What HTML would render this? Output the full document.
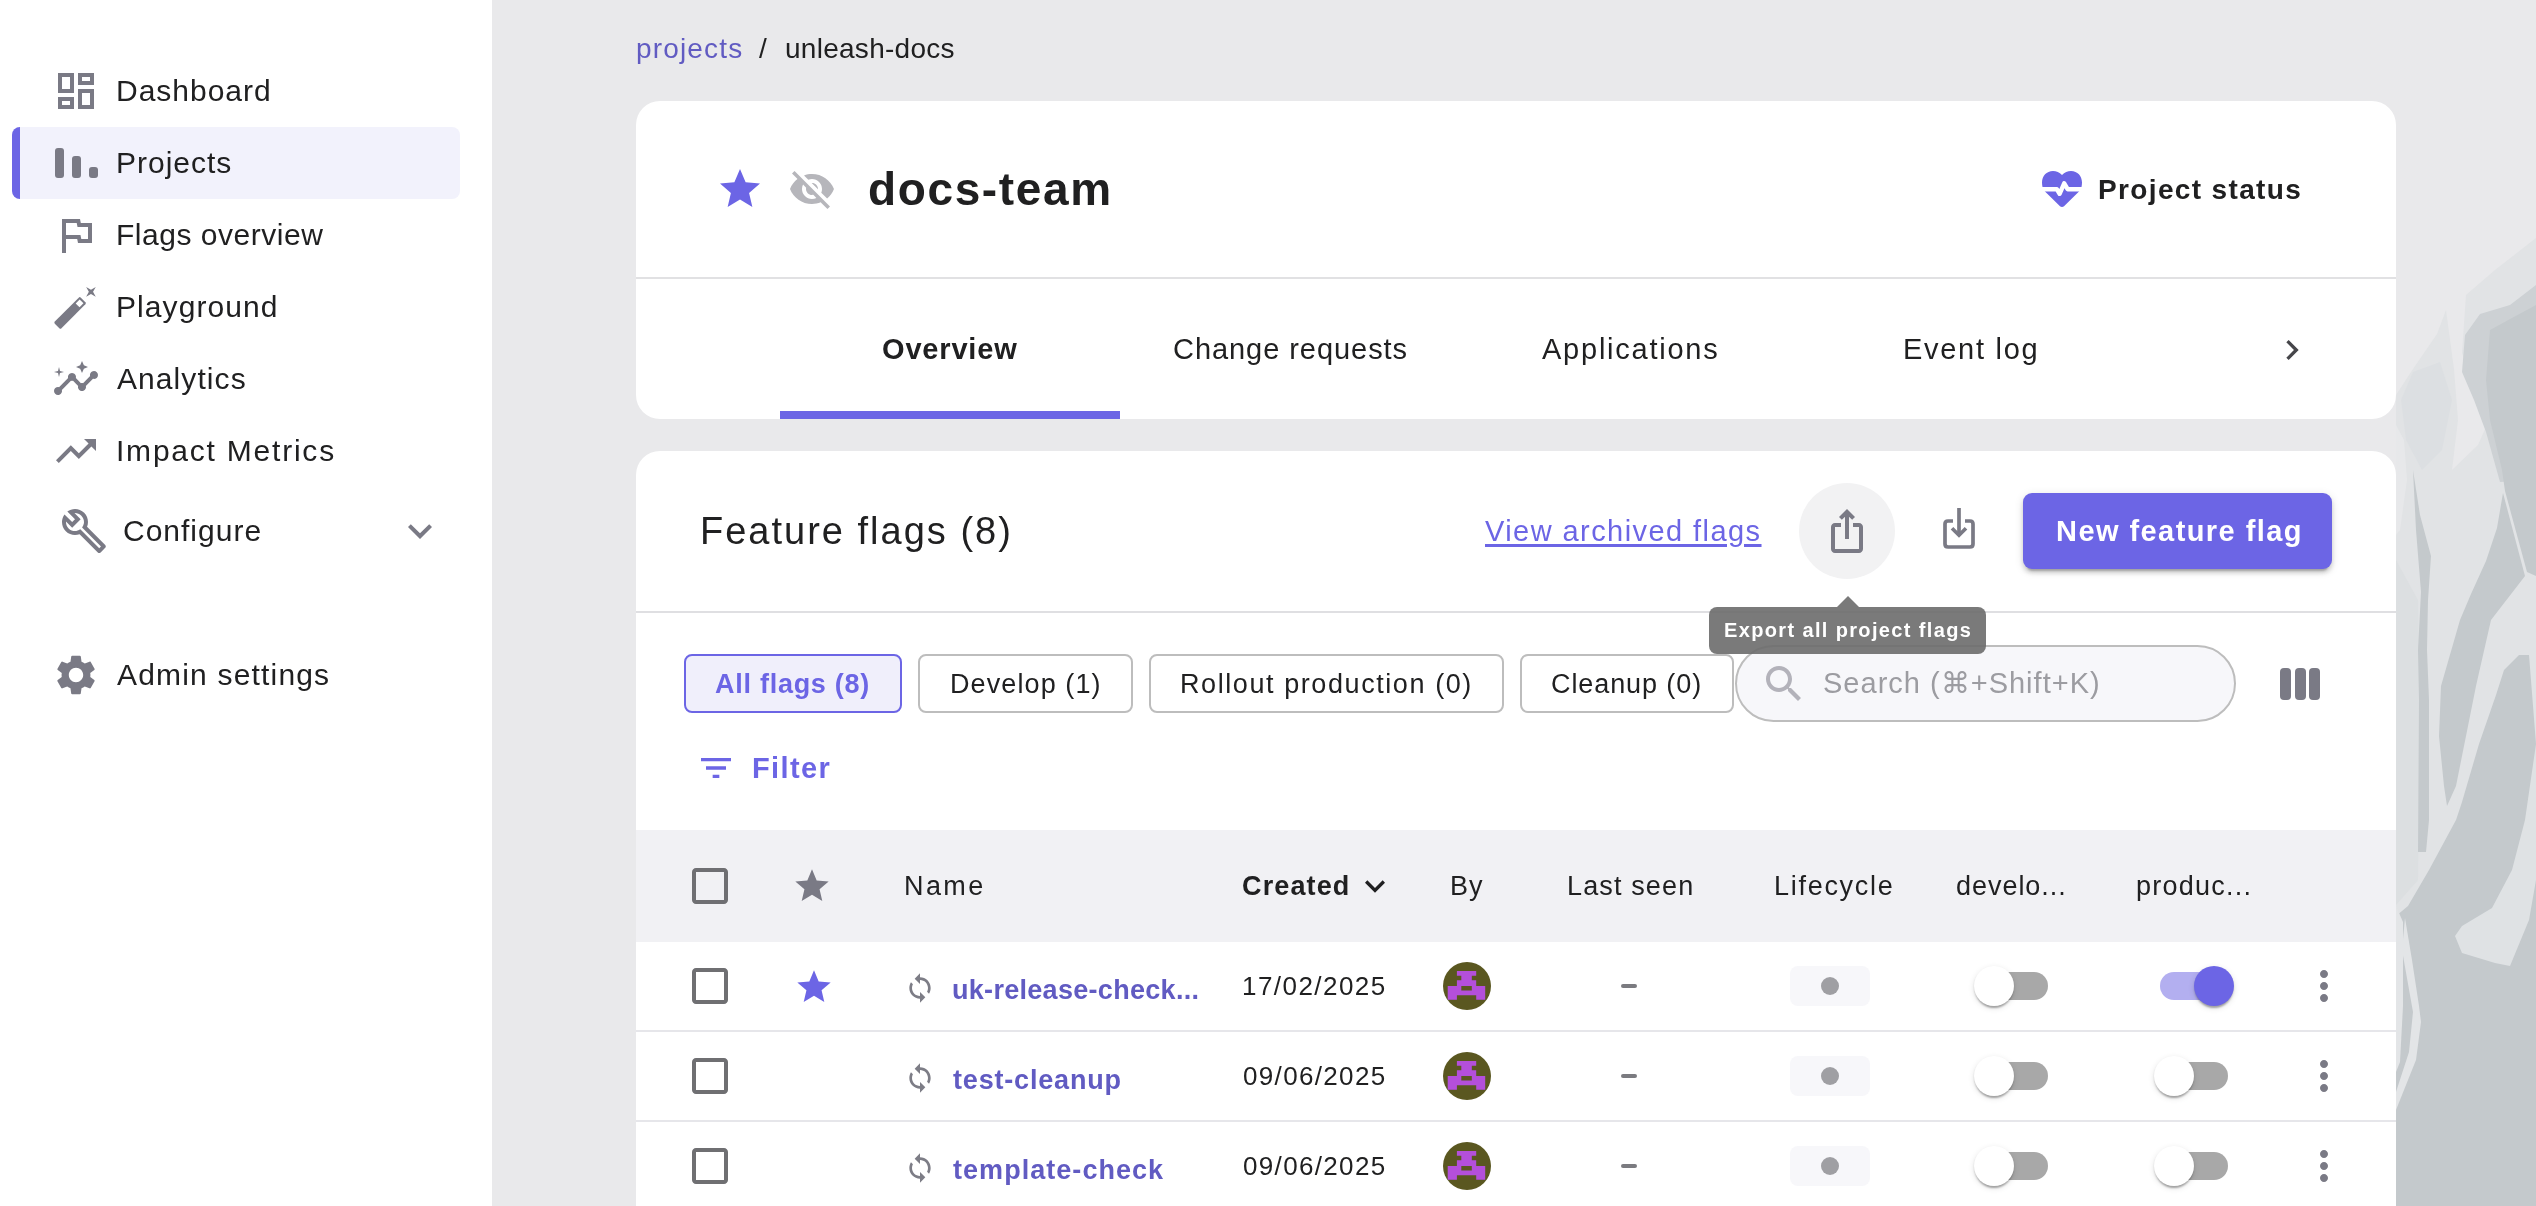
<!DOCTYPE html>
<html><head><meta charset="utf-8"><style>
html,body{margin:0;padding:0;width:2536px;height:1206px;overflow:hidden;background:#E9E9EB}
body{position:relative;font-family:"Liberation Sans",sans-serif}
.t{position:absolute;white-space:nowrap;will-change:transform}
svg{display:block}
</style></head><body>
<div style="position:absolute;left:0;top:0;width:492px;height:1206px;background:#fff"></div>
<div style="position:absolute;left:12px;top:127px;width:448px;height:72px;background:#F2F2FC;border-radius:8px;overflow:hidden"><div style="position:absolute;left:0;top:0;width:8px;height:72px;background:#6C65E5"></div></div>
<svg style="position:absolute;left:52px;top:67px;" width="48" height="48" viewBox="0 0 24 24" fill="#7A7A85"><path d="M19 5v2h-4V5h4M9 5v6H5V5h4m10 8v6h-4v-6h4M9 17v2H5v-2h4M21 3h-8v6h8V3zM11 3H3v10h8V3zm10 8h-8v10h8V11zm-10 4H3v6h8v-6z"/></svg>
<div style="position:absolute;left:55px;top:147.5px;width:8.5px;height:30px;border-radius:3px;background:#7A7A85"></div>
<div style="position:absolute;left:72px;top:156px;width:8.5px;height:21.5px;border-radius:3px;background:#7A7A85"></div>
<div style="position:absolute;left:89px;top:166.5px;width:8.5px;height:11px;border-radius:3px;background:#7A7A85"></div>
<svg style="position:absolute;left:52px;top:211px;" width="48" height="48" viewBox="0 0 24 24" fill="#7A7A85"><path d="M12.36 6l.4 2H18v6h-3.36l-.4-2H7V6h5.36M14 4H5v17h2v-7h5.6l.4 2h7V6h-5.6L14 4z"/></svg>
<svg style="position:absolute;left:0;top:0" width="120" height="720" viewBox="0 0 120 720"><g transform="translate(70.1 312.9) rotate(-45)"><rect x="-18.4" y="-4.7" width="36.8" height="9.4" rx="1.5" fill="#7A7A85"/><rect x="10.6" y="-2.7" width="5.6" height="5.4" fill="#fff"/></g><path d="M86.15 287.05 L90.95 289.75 L95.75 287.05 L93.05 291.85 L95.75 296.65 L90.95 293.95 L86.15 296.65 L88.85 291.85Z" fill="#7A7A85"/></svg>
<svg style="position:absolute;left:52px;top:355px;" width="48" height="48" viewBox="0 0 24 24" fill="#7A7A85"><path d="M21 8c-1.45 0-2.26 1.44-1.93 2.51l-3.55 3.56c-.3-.09-.74-.09-1.04 0l-2.55-2.55C12.27 10.45 11.46 9 10 9c-1.45 0-2.27 1.44-1.93 2.52l-4.56 4.55C2.44 15.74 1 16.55 1 18c0 1.1.9 2 2 2 1.45 0 2.26-1.44 1.93-2.51l4.55-4.56c.3.09.74.09 1.04 0l2.55 2.55C12.73 16.55 13.54 18 15 18c1.45 0 2.27-1.44 1.93-2.52l3.56-3.55c1.07.33 2.51-.48 2.51-1.93 0-1.1-.9-2-2-2z"/><path d="M15 9l.94-2.07L18 6l-2.06-.93L15 3l-.92 2.07L12 6l2.08.93z"/><path d="M3.5 11 4 9l2-.5L4 8l-.5-2L3 8l-2 .5L3 9z"/></svg>
<svg style="position:absolute;left:52px;top:427px;" width="48" height="48" viewBox="0 0 24 24" fill="#7A7A85"><path d="M16 6l2.29 2.29-4.88 4.88-4-4L2 16.59 3.41 18l6-6 4 4 6.3-6.29L22 12V6z"/></svg>
<svg style="position:absolute;left:60.2px;top:506.6px;" width="48" height="48" viewBox="0 0 24 24" fill="#7A7A85"><path d="M22.61 18.99l-9.08-9.08c.93-2.34.45-5.1-1.44-7C9.79.61 6.21.4 3.66 2.26L7.5 6.11 6.08 7.52 2.25 3.69C.39 6.23.6 9.82 2.9 12.11c1.86 1.86 4.57 2.35 6.89 1.48l9.11 9.11c.39.39 1.02.39 1.41 0l2.3-2.3c.4-.38.4-1.01 0-1.41zm-3 1.6l-9.46-9.46c-.61.45-1.29.72-2 .82-1.36.2-2.79-.21-3.83-1.25C3.37 9.76 2.93 8.5 3 7.26l3.09 3.09 4.24-4.24-3.09-3.09c1.24-.07 2.49.37 3.44 1.31 1.08 1.08 1.490 2.57 1.24 3.96-.12.71-.42 1.37-.88 1.96l9.45 9.45-.88.89z"/></svg>
<svg style="position:absolute;left:395.6px;top:507px;" width="48" height="48" viewBox="0 0 24 24" fill="#7A7A85"><path d="M16.59 8.59 12 13.17 7.41 8.59 6 10l6 6 6-6z"/></svg>
<svg style="position:absolute;left:52px;top:650.6px;" width="48" height="48" viewBox="0 0 24 24" fill="#7A7A85"><path d="M19.14 12.94c.04-.3.06-.61.06-.94 0-.32-.02-.64-.07-.94l2.03-1.58c.18-.14.23-.41.12-.61l-1.920-3.32c-.12-.22-.37-.29-.59-.22l-2.39.96c-.5-.38-1.03-.7-1.62-.94l-.36-2.54c-.04-.24-.24-.41-.48-.41h-3.84c-.24 0-.43.17-.47.41l-.36 2.54c-.59.24-1.13.57-1.62.94l-2.39-.96c-.22-.08-.47 0-.59.22L2.74 8.87c-.12.21-.08.47.12.61l2.03 1.58c-.05.3-.09.63-.09.94s.02.64.07.94l-2.03 1.58c-.18.14-.23.41-.12.61l1.92 3.32c.12.22.37.29.59.22l2.39-.96c.5.38 1.03.7 1.62.94l.36 2.54c.05.24.24.41.48.41h3.840c.24 0 .44-.17.47-.41l.36-2.54c.59-.24 1.13-.56 1.62-.94l2.39.96c.22.08.47 0 .59-.22l1.92-3.32c.12-.22.07-.47-.12-.61l-2.01-1.58zM12 15.6c-1.98 0-3.6-1.62-3.6-3.6s1.62-3.6 3.6-3.6 3.6 1.62 3.6 3.6-1.62 3.6-3.6 3.6z"/></svg>
<div class="t" id="tx0" style="left:116.00px;top:75.70px;font-size:30px;line-height:30px;letter-spacing:0.994px;font-weight:400;color:#202021;">Dashboard</div>
<div class="t" id="tx1" style="left:116.00px;top:148.20px;font-size:30px;line-height:30px;letter-spacing:0.993px;font-weight:400;color:#202021;">Projects</div>
<div class="t" id="tx2" style="left:116.00px;top:219.60px;font-size:30px;line-height:30px;letter-spacing:0.527px;font-weight:400;color:#202021;">Flags overview</div>
<div class="t" id="tx3" style="left:116.00px;top:291.61px;font-size:30px;line-height:30px;letter-spacing:1.083px;font-weight:400;color:#202021;">Playground</div>
<div class="t" id="tx4" style="left:116.80px;top:363.61px;font-size:30px;line-height:30px;letter-spacing:1.075px;font-weight:400;color:#202021;">Analytics</div>
<div class="t" id="tx5" style="left:116.40px;top:436.31px;font-size:30px;line-height:30px;letter-spacing:1.777px;font-weight:400;color:#202021;">Impact Metrics</div>
<div class="t" id="tx6" style="left:123.40px;top:516.31px;font-size:30px;line-height:30px;letter-spacing:1.000px;font-weight:400;color:#202021;">Configure</div>
<div class="t" id="tx7" style="left:116.80px;top:659.81px;font-size:30px;line-height:30px;letter-spacing:1.181px;font-weight:400;color:#202021;">Admin settings</div>
<div style="position:absolute;left:492px;top:0;width:2044px;height:1206px;background:#E9E9EB"></div>
<svg style="position:absolute;left:2396px;top:0" width="140" height="1206" viewBox="2396 0 140 1206">
<rect x="2396" y="0" width="140" height="1206" fill="#E9E9EB"/>
<path d="M2536 238 L2495 270 L2466 295 L2462 353 L2474 386 L2489 420 L2478 445 L2452 470 L2458 420 L2454 369 L2446 310 L2437 334 L2413 369 L2396 395 L2396 1206 L2536 1206 Z" fill="#E1E3E5"/>
<path d="M2396 425 L2404 440 L2407 480 L2400 530 L2396 535 Z" fill="#E7E8EA"/>
<path d="M2536 285 L2510 305 L2480 314 L2465 335 L2462 372 L2474 400 L2486 432 L2500 482 L2536 480 Z" fill="#CDD1D4"/>
<path d="M2413 372 L2440 362 L2452 400 L2442 450 L2422 470 L2406 440 L2401 400 Z" fill="#DCDFE2"/>
<path d="M2396 560 L2418 600 L2420 700 L2418 880 L2396 905 Z" fill="#DCDFE1"/>
<path d="M2536 305 L2512 318 L2490 330 L2486 380 L2490 420 L2502 470 L2505 491 L2527 572 L2536 576 Z" fill="#C4C9CC"/>
<path d="M2503 493 L2497 528 L2486 561 L2471 594 L2460 620 L2441 686 L2439 736 L2444 786 L2447 806 L2456 786 L2466 736 L2476 686 L2491 620 L2525 576 Z" fill="#C4C9CC"/>
<path d="M2413 470 L2420 515 L2431 556 L2428 600 L2427 650 L2429 700 L2429 820 L2426 852 L2418 852 L2419 700 L2418 650 L2421 592 L2416 530 Z" fill="#C4C9CC"/>
<path d="M2519 655 L2504 670 L2496 695 L2479 744 L2462 802 L2456 820 L2429 870 L2408 906 L2396 916 L2396 1206 L2536 1206 L2536 744 L2529 655 Z" fill="#C4C9CC"/>
<path d="M2536 744 L2525 820 L2512 870 L2492 908 L2462 926 L2455 936 L2462 953 L2495 963 L2510 966 L2529 920 L2536 880 Z" fill="#DFE2E4"/>
<path d="M2405 918 L2412 960 L2419 1006 L2421 1022 L2416 1060 L2396 1110 L2396 1092 L2409 1052 L2413 1012 L2402 950 Z" fill="#E3E5E7"/>
<path d="M2396 906 L2403 922 L2403 1006 L2400 1062 L2396 1072 Z" fill="#E3E5E7"/>
</svg>

<div class="t" id="tx8" style="left:636.10px;top:35.30px;font-size:28px;line-height:28px;letter-spacing:1.157px;font-weight:400;color:#615BC2;">projects</div>
<div class="t" id="tx9" style="left:759.00px;top:35.30px;font-size:28px;line-height:28px;letter-spacing:0.000px;font-weight:400;color:#202021;">/</div>
<div class="t" id="tx10" style="left:785.40px;top:35.30px;font-size:28px;line-height:28px;letter-spacing:0.273px;font-weight:400;color:#202021;">unleash-docs</div>
<div style="position:absolute;left:636px;top:101px;width:1760px;height:318px;background:#fff;border-radius:24px;overflow:hidden"><div style="position:absolute;left:0;top:176px;width:1760px;height:2px;background:#E1E1E3"></div><div style="position:absolute;left:144px;top:310px;width:340px;height:8px;background:#6C65E5"></div></div>
<svg style="position:absolute;left:715.6px;top:164.6px;" width="48" height="48" viewBox="0 0 24 24" fill="#6C65E5"><path d="M12 17.27 18.18 21l-1.64-7.03L22 9.24l-7.19-.61L12 2 9.19 8.63 2 9.24l5.46 4.73L5.82 21z"/></svg>
<svg style="position:absolute;left:788px;top:165.2px;" width="48" height="48" viewBox="0 0 24 24" fill="#B6B6BB"><path d="M12 7c2.76 0 5 2.24 5 5 0 .65-.13 1.26-.36 1.83l2.92 2.92c1.51-1.26 2.7-2.89 3.43-4.75-1.73-4.39-6-7.5-11-7.5-1.4 0-2.74.25-3.98.7l2.16 2.16C10.74 7.13 11.350 7 12 7zM2 4.27l2.28 2.28.46.46C3.08 8.3 1.78 10.02 1 12c1.73 4.39 6 7.5 11 7.5 1.55 0 3.03-.3 4.38-.84l.42.42L19.73 22 21 20.73 3.27 3 2 4.27zM7.53 9.8l1.55 1.55c-.05.21-.08.43-.08.65 0 1.66 1.34 3 3 3 .22 0 .44-.03.65-.08l1.55 1.55c-.67.33-1.41.53-2.2.53-2.76 0-5-2.24-5-5 0-.79.2-1.53.53-2.2zm4.31-.78 3.15 3.15.02-.16c0-1.66-1.34-3-3-3l-.17.01z"/></svg>
<div class="t" id="tx11" style="left:868.00px;top:166.06px;font-size:46px;line-height:46px;letter-spacing:1.625px;font-weight:700;color:#202021;">docs-team</div>
<svg style="position:absolute;left:2042px;top:171px" width="40" height="37" viewBox="0 0 40 37"><path d="M20 4C17.5 1.3 14.3 0 11 0C4.5 0 0 5 0 11.5C0 13 .2 14.6 .5 16L3 20.5L18 35.2C19 36.3 21 36.3 22 35.2L37 20.5L39.5 16C39.8 14.6 40 13 40 11.5C40 5 35.5 0 29 0C25.7 0 22.5 1.3 20 4Z" fill="#6C65E5"/><path d="M-2 18.2H14.8L17.6 22.8L22.2 12.3L25.6 18.2H42" fill="none" stroke="#fff" stroke-width="4.4" stroke-linejoin="round"/></svg>
<div class="t" id="tx12" style="left:2097.70px;top:176.00px;font-size:28px;line-height:28px;letter-spacing:1.358px;font-weight:700;color:#202021;">Project status</div>
<div class="t" id="tx13" style="left:882.10px;top:335.35px;font-size:29px;line-height:29px;letter-spacing:0.821px;font-weight:700;color:#202021;">Overview</div>
<div class="t" id="tx14" style="left:1173.00px;top:335.45px;font-size:29px;line-height:29px;letter-spacing:0.943px;font-weight:400;color:#202021;">Change requests</div>
<div class="t" id="tx15" style="left:1542.00px;top:334.75px;font-size:29px;line-height:29px;letter-spacing:1.759px;font-weight:400;color:#202021;">Applications</div>
<div class="t" id="tx16" style="left:1902.70px;top:335.45px;font-size:29px;line-height:29px;letter-spacing:1.712px;font-weight:400;color:#202021;">Event log</div>
<svg style="position:absolute;left:2272.3px;top:330px;" width="40" height="40" viewBox="0 0 24 24" fill="#46464A"><path d="M8.59 16.59 13.17 12 8.59 7.41 10 6l6 6-6 6-1.41-1.41z"/></svg>
<div style="position:absolute;left:636px;top:451px;width:1760px;height:800px;background:#fff;border-radius:24px;overflow:hidden"><div style="position:absolute;left:0;top:160px;width:1760px;height:2px;background:#DFDFE2"></div><div style="position:absolute;left:0;top:379px;width:1760px;height:112px;background:#F1F1F4"></div><div style="position:absolute;left:0;top:579px;width:1760px;height:2px;background:#E6E6EA"></div><div style="position:absolute;left:0;top:669px;width:1760px;height:2px;background:#E6E6EA"></div></div>
<div class="t" id="tx17" style="left:700.20px;top:511.83px;font-size:38px;line-height:38px;letter-spacing:2.003px;font-weight:400;color:#202021;">Feature flags (8)</div>
<div class="t" id="tx18" style="left:1485.00px;top:517.45px;font-size:29px;line-height:29px;letter-spacing:1.431px;font-weight:400;color:#6C65E5;text-decoration:underline;text-decoration-thickness:3px;text-underline-offset:3px;">View archived flags</div>
<div style="position:absolute;left:1799px;top:483px;width:96px;height:96px;border-radius:48px;background:#F2F2F3"></div>
<svg style="position:absolute;left:1823px;top:507px;" width="48" height="48" viewBox="0 0 24 24" fill="#7A7A85"><path d="M16 5l-1.42 1.42-1.59-1.59V16h-1.98V4.83L9.42 6.42 8 5l4-4 4 4zm4 5v11c0 1.1-.9 2-2 2H6c-1.11 0-2-.9-2-2V10c0-1.11.89-2 2-2h3v2H6v11h12V10h-3V8h3c1.1 0 2 .89 2 2z"/></svg>
<svg style="position:absolute;left:1930px;top:500px" width="60" height="60" viewBox="1930 500 60 60"><path d="M1953 521H1948Q1945 521 1945 524V544Q1945 547 1948 547H1970Q1973 547 1973 544V524Q1973 521 1970 521H1965" fill="none" stroke="#7A7A85" stroke-width="3.7"/><path d="M1959 508V533" stroke="#7A7A85" stroke-width="3.7"/><path d="M1952 528.3L1959 535.2L1966 528.3" fill="none" stroke="#7A7A85" stroke-width="3.7"/></svg>
<div style="position:absolute;left:2023px;top:493px;width:309px;height:76px;border-radius:9px;background:#6C65E5;box-shadow:0 6px 2px -4px rgba(0,0,0,.2),0 4px 4px 0 rgba(0,0,0,.14),0 2px 10px 0 rgba(0,0,0,.12)"></div>
<div class="t" id="tx19" style="left:2055.50px;top:517.45px;font-size:29px;line-height:29px;letter-spacing:1.433px;font-weight:700;color:#fff;">New feature flag</div>
<div style="position:absolute;left:684px;top:654px;width:218px;height:59px;box-sizing:border-box;border:2px solid #6C65E5;background:#F0EFFB;border-radius:8px"></div>
<div style="position:absolute;left:918px;top:654px;width:215px;height:59px;box-sizing:border-box;border:2px solid #BDBDBD;background:#fff;border-radius:8px"></div>
<div style="position:absolute;left:1149px;top:654px;width:355px;height:59px;box-sizing:border-box;border:2px solid #BDBDBD;background:#fff;border-radius:8px"></div>
<div style="position:absolute;left:1520px;top:654px;width:214px;height:59px;box-sizing:border-box;border:2px solid #BDBDBD;background:#fff;border-radius:8px"></div>
<div class="t" id="tx20" style="left:715.20px;top:670.84px;font-size:27px;line-height:27px;letter-spacing:0.733px;font-weight:700;color:#6C65E5;">All flags (8)</div>
<div class="t" id="tx21" style="left:950.00px;top:670.84px;font-size:27px;line-height:27px;letter-spacing:1.100px;font-weight:400;color:#202021;">Develop (1)</div>
<div class="t" id="tx22" style="left:1180.40px;top:671.14px;font-size:27px;line-height:27px;letter-spacing:1.579px;font-weight:400;color:#202021;">Rollout production (0)</div>
<div class="t" id="tx23" style="left:1551.10px;top:671.14px;font-size:27px;line-height:27px;letter-spacing:0.910px;font-weight:400;color:#202021;">Cleanup (0)</div>
<div style="position:absolute;left:1735px;top:645px;width:501px;height:77px;box-sizing:border-box;border:2px solid #BDBDBD;background:#F7F7FA;border-radius:38.5px"></div>
<svg style="position:absolute;left:1760px;top:660px;" width="48" height="48" viewBox="0 0 24 24" fill="#B3B2BA"><path d="M15.5 14h-.79l-.28-.27C15.41 12.59 16 11.11 16 9.5 16 5.91 13.09 3 9.5 3S3 5.91 3 9.5 5.91 16 9.5 16c1.61 0 3.09-.59 4.23-1.57l.27.28v.79l5 4.99L20.49 19l-4.99-5zm-6 0C7.01 14 5 11.99 5 9.5S7.01 5 9.5 5 14 7.01 14 9.5 11.99 14 9.5 14z"/></svg>
<div class="t" id="tx24" style="left:1823.10px;top:669.45px;font-size:29px;line-height:29px;letter-spacing:1.009px;font-weight:400;color:#9C9CA1;">Search (⌘+Shift+K)</div>
<div style="position:absolute;left:2279.7px;top:668px;width:10.9px;height:32px;border-radius:4px;background:#7A7A85"></div>
<div style="position:absolute;left:2294.9px;top:668px;width:10.9px;height:32px;border-radius:4px;background:#7A7A85"></div>
<div style="position:absolute;left:2309.3px;top:668px;width:10.9px;height:32px;border-radius:4px;background:#7A7A85"></div>
<svg style="position:absolute;left:696px;top:747.5px;" width="40" height="40" viewBox="0 0 24 24" fill="#6C65E5"><path d="M10 18h4v-2h-4v2zM3 6v2h18V6H3zm3 7h12v-2H6v2z"/></svg>
<div class="t" id="tx25" style="left:751.80px;top:754.45px;font-size:29px;line-height:29px;letter-spacing:1.380px;font-weight:700;color:#6C65E5;">Filter</div>
<svg style="position:absolute;left:686px;top:861.6px;" width="48" height="48" viewBox="0 0 24 24" fill="#6F6F72"><path d="M19 5v14H5V5h14m0-2H5c-1.1 0-2 .9-2 2v14c0 1.1.9 2 2 2h14c1.1 0 2-.9 2-2V5c0-1.1-.9-2-2-2z"/></svg>
<svg style="position:absolute;left:792px;top:865.6px;" width="40" height="40" viewBox="0 0 24 24" fill="#7A7A85"><path d="M12 17.27 18.18 21l-1.64-7.03L22 9.24l-7.19-.61L12 2 9.19 8.63 2 9.24l5.46 4.73L5.82 21z"/></svg>
<div class="t" id="tx26" style="left:904.00px;top:873.44px;font-size:27px;line-height:27px;letter-spacing:2.400px;font-weight:400;color:#202021;">Name</div>
<div class="t" id="tx27" style="left:1242.30px;top:872.54px;font-size:27px;line-height:27px;letter-spacing:1.133px;font-weight:700;color:#202021;">Created</div>
<svg style="position:absolute;left:1354.9px;top:866.2px;" width="40" height="40" viewBox="0 0 24 24" fill="#202021"><path d="M7.41 8.59 12 13.17l4.59-4.58L18 10l-6 6-6-6 1.41-1.41z"/></svg>
<div class="t" id="tx28" style="left:1449.60px;top:873.44px;font-size:27px;line-height:27px;letter-spacing:1.000px;font-weight:400;color:#202021;">By</div>
<div class="t" id="tx29" style="left:1567.10px;top:873.44px;font-size:27px;line-height:27px;letter-spacing:1.138px;font-weight:400;color:#202021;">Last seen</div>
<div class="t" id="tx30" style="left:1774.10px;top:873.44px;font-size:27px;line-height:27px;letter-spacing:1.712px;font-weight:400;color:#202021;">Lifecycle</div>
<div class="t" id="tx31" style="left:1956.30px;top:873.44px;font-size:27px;line-height:27px;letter-spacing:0.963px;font-weight:400;color:#202021;">develo...</div>
<div class="t" id="tx32" style="left:2135.90px;top:873.44px;font-size:27px;line-height:27px;letter-spacing:1.237px;font-weight:400;color:#202021;">produc...</div>
<svg style="position:absolute;left:686px;top:962px;" width="48" height="48" viewBox="0 0 24 24" fill="#6F6F72"><path d="M19 5v14H5V5h14m0-2H5c-1.1 0-2 .9-2 2v14c0 1.1.9 2 2 2h14c1.1 0 2-.9 2-2V5c0-1.1-.9-2-2-2z"/></svg>
<svg style="position:absolute;left:794px;top:966.7px;" width="40" height="40" viewBox="0 0 24 24" fill="#6C65E5"><path d="M12 17.27 18.18 21l-1.64-7.03L22 9.24l-7.19-.61L12 2 9.19 8.63 2 9.24l5.46 4.73L5.82 21z"/></svg>
<svg style="position:absolute;left:904.4px;top:972.2px;" width="32" height="32" viewBox="0 0 24 24" fill="#7D7D86"><path d="M12 4V1L8 5l4 4V6c3.31 0 6 2.690 6 6 0 1.01-.25 1.97-.7 2.8l1.46 1.46C19.54 15.03 20 13.57 20 12c0-4.42-3.58-8-8-8zm0 14c-3.31 0-6-2.69-6-6 0-1.01.25-1.97.7-2.8L5.24 7.74C4.46 8.97 4 10.43 4 12c0 4.42 3.58 8 8 8v3l4-4-4-4v3z"/></svg>
<div class="t" id="tx33" style="left:951.90px;top:976.84px;font-size:27px;line-height:27px;letter-spacing:0.297px;font-weight:700;color:#615BC2;">uk-release-check...</div>
<div class="t" id="tx34" style="left:1241.70px;top:973.29px;font-size:26px;line-height:26px;letter-spacing:1.450px;font-weight:400;color:#202021;">17/02/2025</div>
<svg style="position:absolute;left:1443px;top:962px" width="48" height="48" viewBox="0 0 48 48"><circle cx="24" cy="24" r="24" fill="#5A5720"/><path d="M13.9 9H33.2V13.8H28.8V18.2H33.2V24H42.2V37.8H33.2V33.2H13.9V37.8H4.7V24H13.9V18.2H18.3V13.8H13.9ZM18.3 24V28.6H28.8V24Z" fill="#B44FDB" fill-rule="evenodd"/></svg>
<div style="position:absolute;left:1621px;top:984px;width:16px;height:4px;border-radius:2px;background:#7B7B80"></div>
<div style="position:absolute;left:1790px;top:966px;width:80px;height:40px;border-radius:8px;background:#F7F7FA"></div>
<div style="position:absolute;left:1821px;top:977px;width:18px;height:18px;border-radius:9px;background:#9F9FA3"></div>
<div style="position:absolute;left:1980px;top:972px;width:68px;height:28px;border-radius:14px;background:#A8A8A8"></div><div style="position:absolute;left:1974px;top:966px;width:40px;height:40px;border-radius:20px;background:#fff;box-shadow:0 4px 2px -2px rgba(0,0,0,.2),0 2px 2px 0 rgba(0,0,0,.14),0 2px 6px 0 rgba(0,0,0,.12)"></div>
<div style="position:absolute;left:2160px;top:972px;width:68px;height:28px;border-radius:14px;background:#B3AFF0"></div><div style="position:absolute;left:2194px;top:966px;width:40px;height:40px;border-radius:20px;background:#6C65E5;box-shadow:0 4px 2px -2px rgba(0,0,0,.2),0 2px 2px 0 rgba(0,0,0,.14),0 2px 6px 0 rgba(0,0,0,.12)"></div>
<svg style="position:absolute;left:2300px;top:962px;" width="48" height="48" viewBox="0 0 24 24" fill="#7A7A85"><path d="M12 8c1.1 0 2-.9 2-2s-.9-2-2-2-2 .9-2 2 .9 2 2 2zm0 2c-1.1 0-2 .9-2 2s.9 2 2 2 2-.9 2-2-.9-2-2-2zm0 6c-1.1 0-2 .9-2 2s.9 2 2 2 2-.9 2-2-.9-2-2-2z"/></svg>
<svg style="position:absolute;left:686px;top:1052px;" width="48" height="48" viewBox="0 0 24 24" fill="#6F6F72"><path d="M19 5v14H5V5h14m0-2H5c-1.1 0-2 .9-2 2v14c0 1.1.9 2 2 2h14c1.1 0 2-.9 2-2V5c0-1.1-.9-2-2-2z"/></svg>
<svg style="position:absolute;left:904.4px;top:1062.2px;" width="32" height="32" viewBox="0 0 24 24" fill="#7D7D86"><path d="M12 4V1L8 5l4 4V6c3.31 0 6 2.690 6 6 0 1.01-.25 1.97-.7 2.8l1.46 1.46C19.54 15.03 20 13.57 20 12c0-4.42-3.58-8-8-8zm0 14c-3.31 0-6-2.69-6-6 0-1.01.25-1.97.7-2.8L5.24 7.74C4.46 8.97 4 10.43 4 12c0 4.42 3.58 8 8 8v3l4-4-4-4v3z"/></svg>
<div class="t" id="tx35" style="left:952.90px;top:1066.84px;font-size:27px;line-height:27px;letter-spacing:0.818px;font-weight:700;color:#615BC2;">test-cleanup</div>
<div class="t" id="tx36" style="left:1242.70px;top:1063.29px;font-size:26px;line-height:26px;letter-spacing:1.339px;font-weight:400;color:#202021;">09/06/2025</div>
<svg style="position:absolute;left:1443px;top:1052px" width="48" height="48" viewBox="0 0 48 48"><circle cx="24" cy="24" r="24" fill="#5A5720"/><path d="M13.9 9H33.2V13.8H28.8V18.2H33.2V24H42.2V37.8H33.2V33.2H13.9V37.8H4.7V24H13.9V18.2H18.3V13.8H13.9ZM18.3 24V28.6H28.8V24Z" fill="#B44FDB" fill-rule="evenodd"/></svg>
<div style="position:absolute;left:1621px;top:1074px;width:16px;height:4px;border-radius:2px;background:#7B7B80"></div>
<div style="position:absolute;left:1790px;top:1056px;width:80px;height:40px;border-radius:8px;background:#F7F7FA"></div>
<div style="position:absolute;left:1821px;top:1067px;width:18px;height:18px;border-radius:9px;background:#9F9FA3"></div>
<div style="position:absolute;left:1980px;top:1062px;width:68px;height:28px;border-radius:14px;background:#A8A8A8"></div><div style="position:absolute;left:1974px;top:1056px;width:40px;height:40px;border-radius:20px;background:#fff;box-shadow:0 4px 2px -2px rgba(0,0,0,.2),0 2px 2px 0 rgba(0,0,0,.14),0 2px 6px 0 rgba(0,0,0,.12)"></div>
<div style="position:absolute;left:2160px;top:1062px;width:68px;height:28px;border-radius:14px;background:#A8A8A8"></div><div style="position:absolute;left:2154px;top:1056px;width:40px;height:40px;border-radius:20px;background:#fff;box-shadow:0 4px 2px -2px rgba(0,0,0,.2),0 2px 2px 0 rgba(0,0,0,.14),0 2px 6px 0 rgba(0,0,0,.12)"></div>
<svg style="position:absolute;left:2300px;top:1052px;" width="48" height="48" viewBox="0 0 24 24" fill="#7A7A85"><path d="M12 8c1.1 0 2-.9 2-2s-.9-2-2-2-2 .9-2 2 .9 2 2 2zm0 2c-1.1 0-2 .9-2 2s.9 2 2 2 2-.9 2-2-.9-2-2-2zm0 6c-1.1 0-2 .9-2 2s.9 2 2 2 2-.9 2-2-.9-2-2-2z"/></svg>
<svg style="position:absolute;left:686px;top:1142px;" width="48" height="48" viewBox="0 0 24 24" fill="#6F6F72"><path d="M19 5v14H5V5h14m0-2H5c-1.1 0-2 .9-2 2v14c0 1.1.9 2 2 2h14c1.1 0 2-.9 2-2V5c0-1.1-.9-2-2-2z"/></svg>
<svg style="position:absolute;left:904.4px;top:1152.2px;" width="32" height="32" viewBox="0 0 24 24" fill="#7D7D86"><path d="M12 4V1L8 5l4 4V6c3.31 0 6 2.690 6 6 0 1.01-.25 1.97-.7 2.8l1.46 1.46C19.54 15.03 20 13.57 20 12c0-4.42-3.58-8-8-8zm0 14c-3.31 0-6-2.69-6-6 0-1.01.25-1.97.7-2.8L5.24 7.74C4.46 8.97 4 10.43 4 12c0 4.42 3.58 8 8 8v3l4-4-4-4v3z"/></svg>
<div class="t" id="tx37" style="left:952.90px;top:1156.84px;font-size:27px;line-height:27px;letter-spacing:1.042px;font-weight:700;color:#615BC2;">template-check</div>
<div class="t" id="tx38" style="left:1242.70px;top:1153.29px;font-size:26px;line-height:26px;letter-spacing:1.339px;font-weight:400;color:#202021;">09/06/2025</div>
<svg style="position:absolute;left:1443px;top:1142px" width="48" height="48" viewBox="0 0 48 48"><circle cx="24" cy="24" r="24" fill="#5A5720"/><path d="M13.9 9H33.2V13.8H28.8V18.2H33.2V24H42.2V37.8H33.2V33.2H13.9V37.8H4.7V24H13.9V18.2H18.3V13.8H13.9ZM18.3 24V28.6H28.8V24Z" fill="#B44FDB" fill-rule="evenodd"/></svg>
<div style="position:absolute;left:1621px;top:1164px;width:16px;height:4px;border-radius:2px;background:#7B7B80"></div>
<div style="position:absolute;left:1790px;top:1146px;width:80px;height:40px;border-radius:8px;background:#F7F7FA"></div>
<div style="position:absolute;left:1821px;top:1157px;width:18px;height:18px;border-radius:9px;background:#9F9FA3"></div>
<div style="position:absolute;left:1980px;top:1152px;width:68px;height:28px;border-radius:14px;background:#A8A8A8"></div><div style="position:absolute;left:1974px;top:1146px;width:40px;height:40px;border-radius:20px;background:#fff;box-shadow:0 4px 2px -2px rgba(0,0,0,.2),0 2px 2px 0 rgba(0,0,0,.14),0 2px 6px 0 rgba(0,0,0,.12)"></div>
<div style="position:absolute;left:2160px;top:1152px;width:68px;height:28px;border-radius:14px;background:#A8A8A8"></div><div style="position:absolute;left:2154px;top:1146px;width:40px;height:40px;border-radius:20px;background:#fff;box-shadow:0 4px 2px -2px rgba(0,0,0,.2),0 2px 2px 0 rgba(0,0,0,.14),0 2px 6px 0 rgba(0,0,0,.12)"></div>
<svg style="position:absolute;left:2300px;top:1142px;" width="48" height="48" viewBox="0 0 24 24" fill="#7A7A85"><path d="M12 8c1.1 0 2-.9 2-2s-.9-2-2-2-2 .9-2 2 .9 2 2 2zm0 2c-1.1 0-2 .9-2 2s.9 2 2 2 2-.9 2-2-.9-2-2-2zm0 6c-1.1 0-2 .9-2 2s.9 2 2 2 2-.9 2-2-.9-2-2-2z"/></svg>
<div style="position:absolute;left:1709px;top:607px;width:277px;height:47px;border-radius:8px;background:rgba(108,108,108,0.9)"></div>
<div style="position:absolute;left:1837px;top:596px;width:0;height:0;border-left:11px solid transparent;border-right:11px solid transparent;border-bottom:11px solid rgba(108,108,108,0.9)"></div>
<div class="t" id="tx39" style="left:1723.80px;top:619.97px;font-size:20px;line-height:20px;letter-spacing:1.359px;font-weight:700;color:#fff;">Export all project flags</div>
</body></html>
